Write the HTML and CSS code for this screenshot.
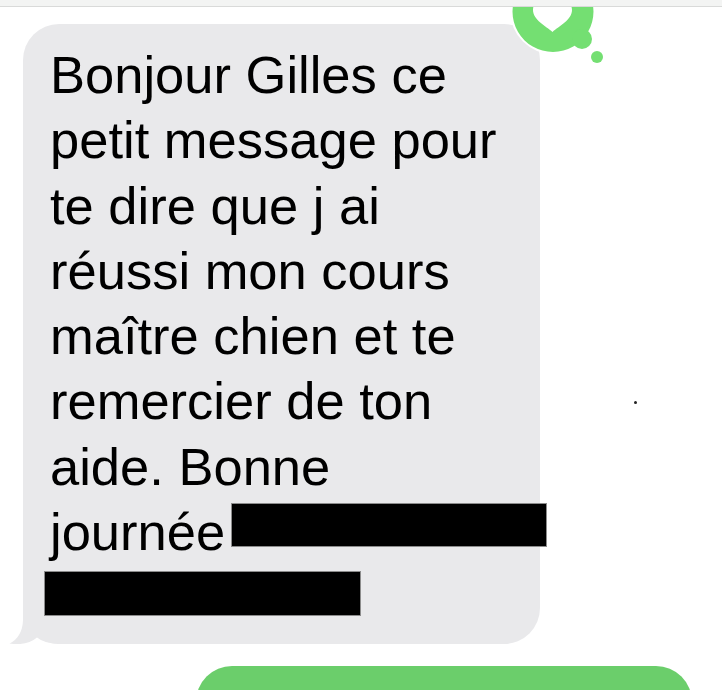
FILE: index.html
```html
<!DOCTYPE html>
<html lang="fr">
<head>
<meta charset="utf-8">
<title>Message</title>
<link rel="stylesheet" href="styles.css">
</head>
<body>
<div class="topbar"></div>
<main class="thread">
  <div class="bubble incoming">
    <svg class="tail" width="52" height="44" viewBox="0 0 52 44"><path d="M15 0 L15 20 Q14.5 37 1.5 43.6 Q19 46 29 37.5 Q37 44 52 44 L52 0 Z" fill="#e9e9eb"/></svg>
    <p class="msg">Bonjour Gilles ce<br>petit message pour<br>te dire que j ai<br>réussi mon cours<br>maître chien et te<br>remercier de ton<br>aide. Bonne<br>journée<span class="redact r1"></span></p>
    <span class="redact r2"></span>
  </div>
  <div class="bubble outgoing"></div>
</main>
<svg class="logo" width="120" height="70" viewBox="490 0 120 70">
  <g fill="#ffffff" stroke="#ffffff" stroke-width="4">
    <circle cx="553" cy="11.5" r="40.5"/>
    <circle cx="582" cy="39" r="10"/>
    <circle cx="597" cy="57" r="6"/>
  </g>
  <path fill="#74df72" fill-rule="evenodd" d="M553 -29 A40.5 40.5 0 1 1 552.99 -29 Z M552.5 32 C546 26 533 20 533 10 C533 0 545 -3 552.5 4 C560 -3 572 0 572 10 C572 20 559 26 552.5 32 Z"/>
  <circle cx="582" cy="39" r="10" fill="#74df72"/>
  <circle cx="597" cy="57" r="6" fill="#74df72"/>
</svg>
<span class="speck"></span>
</body>
</html>
```
FILE: styles.css
```css
html, body {
  margin: 0;
  padding: 0;
  overflow: hidden;
  background: #ffffff;
}
body {
  position: relative;
  width: 722px;
  height: 690px;
  font-family: "Liberation Sans", Arial, sans-serif;
}
.topbar {
  position: relative;
  z-index: 2;
  height: 6px;
  background: #f3f4f3;
  border-bottom: 1px solid #d9dad9;
}
.thread {
  display: flex;
  flex-direction: column;
  align-items: flex-start;
}
.bubble {
  position: relative;
  box-sizing: border-box;
  border-radius: 36px;
}
.incoming {
  margin: 17px 0 0 23px;
  width: 517px;
  padding: 18px 0 28px 27px;
  background: #e9e9eb;
}
.msg {
  position: relative;
  margin: 0;
  font-size: 52.5px;
  line-height: 65.3px;
  color: #000000;
  white-space: nowrap;
}
.redact {
  position: relative;
  box-sizing: border-box;
  background: #000000;
  border: 1px solid #8c8c8c;
}
.r1 {
  display: inline-block;
  width: 316px;
  height: 44px;
  margin-left: 6px;
  vertical-align: 3px;
}
.r2 {
  display: block;
  width: 317px;
  height: 45px;
  margin: 6.5px 0 0 -6px;
}
.tail {
  position: absolute;
  left: -15px;
  bottom: 0;
  display: block;
}
.outgoing {
  margin: 22px 0 0 196px;
  width: 496px;
  height: 80px;
  background: #6bce6b;
}
.logo {
  position: absolute;
  left: 490px;
  top: 0;
  z-index: 1;
}
.speck {
  position: absolute;
  left: 634px;
  top: 401px;
  width: 3px;
  height: 3px;
  border-radius: 50%;
  background: #222222;
}
```
